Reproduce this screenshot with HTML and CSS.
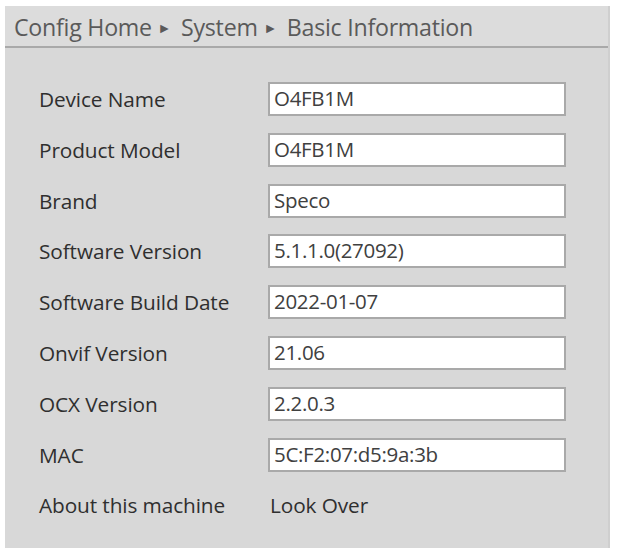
FILE: index.html
```html
<!DOCTYPE html>
<html>
<head>
<meta charset="utf-8">
<link rel="stylesheet" href="styles.css">
</head>
<body>
<div class="panel">
  <div class="crumbs">Config Home <span class="arrow">&#9658;</span> System <span class="arrow">&#9658;</span> Basic Information</div>
  <div class="rows">
    <div class="row"><div class="label">Device Name</div><div class="field">O4FB1M</div></div>
    <div class="row"><div class="label">Product Model</div><div class="field">O4FB1M</div></div>
    <div class="row"><div class="label">Brand</div><div class="field">Speco</div></div>
    <div class="row"><div class="label">Software Version</div><div class="field">5.1.1.0(27092)</div></div>
    <div class="row"><div class="label">Software Build Date</div><div class="field">2022-01-07</div></div>
    <div class="row"><div class="label">Onvif Version</div><div class="field">21.06</div></div>
    <div class="row"><div class="label">OCX Version</div><div class="field">2.2.0.3</div></div>
    <div class="row"><div class="label">MAC</div><div class="field">5C:F2:07:d5:9a:3b</div></div>
    <div class="row"><div class="label">About this machine</div><div class="link">Look Over</div></div>
  </div>
</div>
</body>
</html>
```
FILE: styles.css
```css
html, body {
  margin: 0;
  padding: 0;
  background: #ffffff;
}
body {
  padding: 6px 8px 6px 5px;
  font-family: "Open Sans", "Noto Sans", sans-serif;
  color: #333;
}
.panel {
  background: #d8d8d8;
  height: 542px;
  box-sizing: border-box;
  border-right: 2px solid #cfcfcf;
}
.crumbs {
  height: 42px;
  box-sizing: border-box;
  background: #dcdcdc;
  border-bottom: 2px solid #a9a9a9;
  padding: 5px 0 0 9px;
  font-size: 23.2px;
  line-height: 32px;
  color: #5a5a5a;
  letter-spacing: -0.25px;
  white-space: nowrap;
}
.arrow {
  font-size: 14px;
  vertical-align: 3px;
  margin: 0 4px 0 0;
}
.rows {
  padding: 34px 0 0 34px;
  display: flex;
  flex-direction: column;
  gap: 16.8px;
}
.row {
  display: flex;
  align-items: center;
  height: 34px;
}
.label {
  width: 229px;
  font-size: 20.8px;
  color: #2f2f2f;
  letter-spacing: -0.1px;
  white-space: nowrap;
}
.field {
  width: 298px;
  height: 34px;
  box-sizing: border-box;
  background: #fff;
  border: 2px solid #a9a9a9;
  padding: 0 0 0 4px;
  font-size: 20.5px;
  line-height: 29px;
  color: #404040;
  letter-spacing: -0.3px;
  white-space: nowrap;
}
.link {
  font-size: 20.8px;
  color: #2f2f2f;
  padding-left: 2px;
  letter-spacing: -0.1px;
}
```
